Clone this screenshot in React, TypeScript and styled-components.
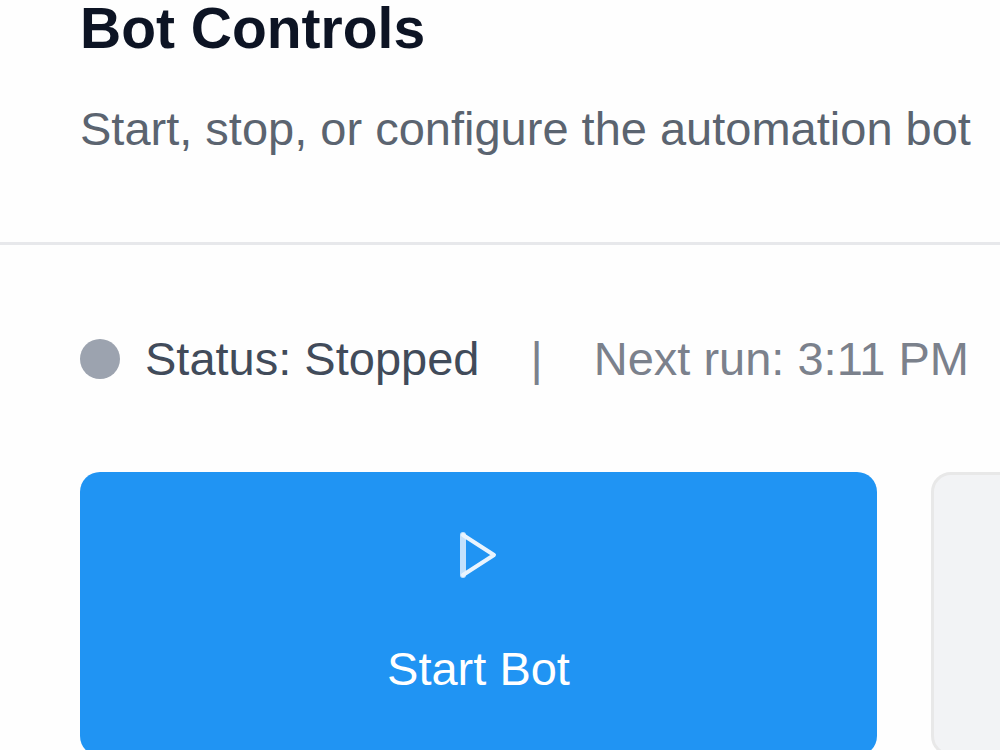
import React from "react";
import styled, { createGlobalStyle } from "styled-components";

const GlobalStyle = createGlobalStyle`
  * { box-sizing: border-box; }
  html, body { margin: 0; height: 100%; overflow: hidden; background: #fefefe; }
  body, button { font-family: "Liberation Sans", Arial, sans-serif; }
`;

const Card = styled.main`
  min-width: 0;
`;

const Header = styled.header`
  padding: 0 0 87px 80px;
  border-bottom: 3px solid #e7e8eb;
`;

const Title = styled.h2`
  margin: 0;
  font-size: 57px;
  line-height: 56px;
  font-weight: 700;
  color: #0d1424;
  white-space: nowrap;
`;

const Description = styled.p`
  margin: 47px 0 0;
  font-size: 47px;
  line-height: 52px;
  color: #5b6470;
  white-space: nowrap;
`;

const Content = styled.section`
  padding: 86px 0 0 80px;
`;

const StatusRow = styled.div`
  display: flex;
  align-items: center;
  gap: 51px;
  font-size: 47px;
  line-height: 56px;
  white-space: nowrap;
`;

const Status = styled.div`
  display: flex;
  align-items: center;
  gap: 25px;
  color: #414b5a;
`;

const Dot = styled.span`
  flex: none;
  width: 40px;
  height: 40px;
  border-radius: 50%;
  background: #9ca3af;
`;

const Muted = styled.span`
  color: #7b818c;
`;

const Actions = styled.div`
  display: grid;
  grid-template-columns: repeat(2, minmax(797px, 1fr));
  gap: 54px;
  margin-top: 85px;
`;

const Action = styled.button<{ $primary?: boolean }>`
  display: flex;
  flex-direction: column;
  align-items: center;
  gap: 62px;
  min-height: 284px;
  padding: 59px 0 44px;
  border: ${(p) => (p.$primary ? "0" : "3px solid #e8e8e8")};
  border-radius: 20px;
  background: ${(p) => (p.$primary ? "#2094f3" : "#f2f3f5")};
  color: ${(p) => (p.$primary ? "#fff" : "#9ca3af")};
  font-size: 47px;
  line-height: 56px;
`;

const PlayIcon = () => (
  <svg
    width="40"
    height="48"
    viewBox="0 0 40 48"
    fill="none"
    strokeLinejoin="round"
    strokeLinecap="round"
    aria-hidden="true"
  >
    <path d="M4 4V44" stroke="#c3e1fc" strokeWidth="6" />
    <path d="M4 4L35 24L4 44" stroke="#e9f4fe" strokeWidth="4" />
  </svg>
);

export default function App() {
  return (
    <>
      <GlobalStyle />
      <Card>
        <Header>
          <Title>Bot Controls</Title>
          <Description>Start, stop, or configure the automation bot</Description>
        </Header>
        <Content>
          <StatusRow>
            <Status>
              <Dot />
              <span>Status: Stopped</span>
            </Status>
            <Muted>|</Muted>
            <Muted>Next run: 3:11 PM</Muted>
          </StatusRow>
          <Actions>
            <Action type="button" $primary>
              <PlayIcon />
              Start Bot
            </Action>
            <Action type="button" aria-label="Stop Bot" />
          </Actions>
        </Content>
      </Card>
    </>
  );
}
